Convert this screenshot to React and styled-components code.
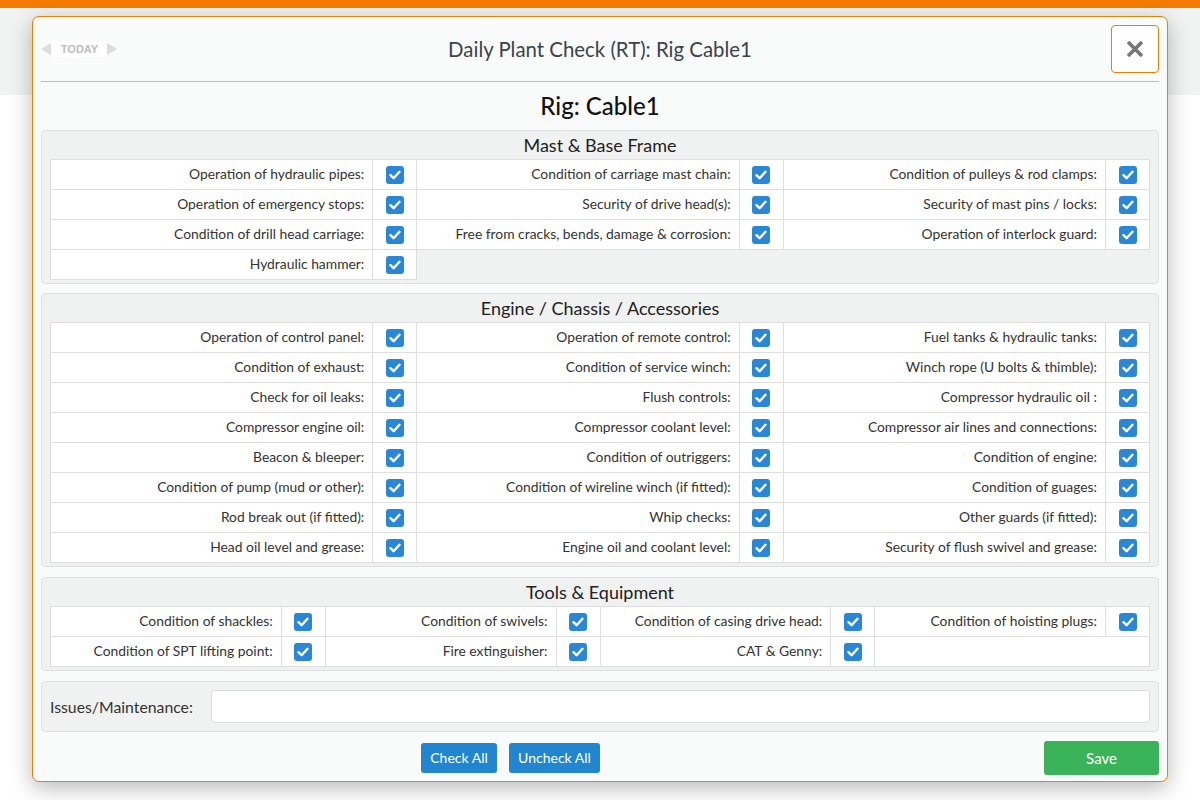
import React from "react";
import styled, { createGlobalStyle } from "styled-components";

const Global = createGlobalStyle`
  html, body { margin: 0; padding: 0; }
  body {
    font-family: Lato, "Open Sans", "Liberation Sans", sans-serif;
    background: #ffffff;
    width: 1200px;
    height: 800px;
    overflow: hidden;
  }
`;

const Page = styled.div`
  position: relative;
  width: 1200px;
  height: 800px;
  display: flex;
  flex-direction: column;
`;

const TopBar = styled.div`
  height: 8px;
  background: #f57c00;
`;

const PageHeader = styled.div`
  height: 87px;
  background: #f1f2f2;
`;

const Modal = styled.div`
  position: absolute;
  left: 32px;
  top: 16px;
  box-sizing: border-box;
  width: 1136px;
  height: 766px;
  background: #f9fafa;
  border: 1px solid #f57c00;
  border-radius: 7px;
  box-shadow: 0 6px 22px rgba(0, 0, 0, 0.28);
  padding: 0 8px;
  display: flex;
  flex-direction: column;
`;

const Header = styled.div`
  height: 64px;
  border-bottom: 1px solid #bdbdbd;
  display: grid;
  grid-template-columns: 1fr auto 1fr;
  align-items: center;
`;

const DayNav = styled.div`
  display: flex;
  align-items: center;
  align-self: start;
  margin-top: 24px;
`;

const Arrow = styled.span`
  width: 0;
  height: 0;
  border-top: 6px solid transparent;
  border-bottom: 6px solid transparent;
  ${(p) =>
    p.dir === "left"
      ? "border-right: 10px solid #dcdcdc;"
      : "border-left: 10px solid #dcdcdc;"}
`;

const TodayLabel = styled.span`
  background: #ffffff;
  color: #bcbcbc;
  font-family: "Liberation Sans", Arial, sans-serif;
  font-weight: bold;
  font-size: 11px;
  width: 56px;
  height: 16px;
  line-height: 16px;
  text-align: center;
  box-sizing: border-box;
  padding-left: 1px;
`;

const Title = styled.h1`
  margin: 0;
  font-size: 20.4px;
  font-weight: 400;
  color: #3a444d;
  padding-top: 0;
`;

const CloseButton = styled.button`
  justify-self: end;
  width: 48px;
  height: 48px;
  margin-top: -1px;
  background: #ffffff;
  border: 1px solid #f57c00;
  border-radius: 4px;
  display: flex;
  align-items: center;
  justify-content: center;
  padding: 0;
  cursor: pointer;
`;

const RigTitle = styled.h2`
  margin: 0;
  height: 48px;
  line-height: 47px;
  text-align: center;
  font-size: 24px;
  font-weight: 500;
  color: #111;
`;

const Section = styled.div`
  background: #f0f1f1;
  border: 1px solid #dfe1e1;
  border-radius: 4px;
  padding: 0 8px 3px;
  margin-bottom: ${(p) => p.$gap ?? 10}px;
`;

const SectionTitle = styled.div`
  height: 28px;
  line-height: 28px;
  text-align: center;
  font-size: 18px;
  color: #222;
`;

const Table = styled.table`
  width: 100%;
  border-collapse: collapse;
  table-layout: fixed;
`;

const Row = styled.tr`
  height: 30px;
`;

const LabelCell = styled.td`
  background: #ffffff;
  border: 1px solid #dedede;
  text-align: right;
  padding: 0 8px 2px 4px;
  font-size: 13.85px;
  color: #333;
  white-space: nowrap;
  height: 29px;
  box-sizing: border-box;
`;

const BoxCell = styled.td`
  background: #ffffff;
  border: 1px solid #dedede;
  text-align: center;
  padding: 0 0 1px;
  height: 29px;
  box-sizing: border-box;
`;

const Box = styled.span`
  display: inline-flex;
  vertical-align: middle;
  width: 18px;
  height: 18px;
  border-radius: 3px;
  background: #2a87d6;
  align-items: center;
  justify-content: center;
  margin-top: -1px;
`;

const IssuesSection = styled(Section)`
  display: flex;
  align-items: center;
  padding: 8px 8px 8px 8px;
`;

const IssuesLabel = styled.label`
  font-size: 15.8px;
  color: #333;
  width: 161px;
  flex-shrink: 0;
  padding-bottom: 1px;
`;

const IssuesInput = styled.input`
  flex: 1;
  height: 33px;
  box-sizing: border-box;
  border: 1px solid #dcdede;
  border-radius: 4px;
  background: #ffffff;
  font-family: inherit;
  font-size: 14px;
  outline: none;
`;

const Footer = styled.div`
  display: flex;
  align-items: center;
  margin-top: -1px;
`;

const ButtonGroup = styled.div`
  display: flex;
  gap: 12px;
  margin-left: 380px;
`;

const Btn = styled.button`
  font-family: inherit;
  font-size: 14px;
  color: #ffffff;
  background: ${(p) => (p.variant === "save" ? "#3bb35a" : "#2185d0")};
  border: none;
  border-radius: 3px;
  height: ${(p) => (p.variant === "save" ? "34px" : "30px")};
  width: ${(p) => p.w}px;
  padding: 0 0 1px;
  cursor: pointer;
  ${(p) => (p.variant === "save" ? "margin-left: auto; font-size: 15px;" : "")}
`;

const Check = () => (
  <Box>
    <svg width="12" height="10" viewBox="0 0 12 10">
      <path
        d="M1.5 5.2 L4.6 8.2 L10.5 1.8"
        fill="none"
        stroke="#fff"
        strokeWidth="2.4"
        strokeLinecap="round"
        strokeLinejoin="round"
      />
    </svg>
  </Box>
);

const mast = [
  ["Operation of hydraulic pipes:", "Condition of carriage mast chain:", "Condition of pulleys & rod clamps:"],
  ["Operation of emergency stops:", "Security of drive head(s):", "Security of mast pins / locks:"],
  ["Condition of drill head carriage:", "Free from cracks, bends, damage & corrosion:", "Operation of interlock guard:"],
  ["Hydraulic hammer:"],
];

const engine = [
  ["Operation of control panel:", "Operation of remote control:", "Fuel tanks & hydraulic tanks:"],
  ["Condition of exhaust:", "Condition of service winch:", "Winch rope (U bolts & thimble):"],
  ["Check for oil leaks:", "Flush controls:", "Compressor hydraulic oil :"],
  ["Compressor engine oil:", "Compressor coolant level:", "Compressor air lines and connections:"],
  ["Beacon & bleeper:", "Condition of outriggers:", "Condition of engine:"],
  ["Condition of pump (mud or other):", "Condition of wireline winch (if fitted):", "Condition of guages:"],
  ["Rod break out (if fitted):", "Whip checks:", "Other guards (if fitted):"],
  ["Head oil level and grease:", "Engine oil and coolant level:", "Security of flush swivel and grease:"],
];

const tools = [
  ["Condition of shackles:", "Condition of swivels:", "Condition of casing drive head:", "Condition of hoisting plugs:"],
  ["Condition of SPT lifting point:", "Fire extinguisher:", "CAT & Genny:"],
];

const CheckTable = ({ rows, cols, fillEmpty }) => (
  <Table>
    <colgroup>
      {Array.from({ length: cols }).map((_, i) => (
        <React.Fragment key={i}>
          <col />
          <col style={{ width: 44 }} />
        </React.Fragment>
      ))}
    </colgroup>
    <tbody>
      {rows.map((r, ri) => (
        <Row key={ri}>
          {r.map((label, ci) => (
            <React.Fragment key={ci}>
              <LabelCell>{label}</LabelCell>
              <BoxCell>
                <Check />
              </BoxCell>
            </React.Fragment>
          ))}
          {fillEmpty && r.length < cols && (
            <LabelCell colSpan={(cols - r.length) * 2} />
          )}
        </Row>
      ))}
    </tbody>
  </Table>
);

export default function App() {
  return (
    <>
      <Global />
      <Page>
        <TopBar />
        <PageHeader />
        <Modal>
          <Header>
            <DayNav>
              <Arrow dir="left" />
              <TodayLabel>TODAY</TodayLabel>
              <Arrow dir="right" />
            </DayNav>
            <Title>Daily Plant Check (RT): Rig Cable1</Title>
            <CloseButton aria-label="Close">
              <svg width="20" height="20" viewBox="0 0 20 20">
                <path
                  d="M3 3 L17 17 M17 3 L3 17"
                  stroke="#767676"
                  strokeWidth="3.6"
                  strokeLinecap="butt"
                />
              </svg>
            </CloseButton>
          </Header>
          <RigTitle>Rig: Cable1</RigTitle>
          <Section $gap={9}>
            <SectionTitle>Mast &amp; Base Frame</SectionTitle>
            <CheckTable rows={mast} cols={3} />
          </Section>
          <Section>
            <SectionTitle>Engine / Chassis / Accessories</SectionTitle>
            <CheckTable rows={engine} cols={3} />
          </Section>
          <Section>
            <SectionTitle>Tools &amp; Equipment</SectionTitle>
            <CheckTable rows={tools} cols={4} fillEmpty />
          </Section>
          <IssuesSection>
            <IssuesLabel>Issues/Maintenance:</IssuesLabel>
            <IssuesInput type="text" />
          </IssuesSection>
          <Footer>
            <ButtonGroup>
              <Btn w={76}>Check All</Btn>
              <Btn w={91}>Uncheck All</Btn>
            </ButtonGroup>
            <Btn variant="save" w={115}>
              Save
            </Btn>
          </Footer>
        </Modal>
      </Page>
    </>
  );
}
